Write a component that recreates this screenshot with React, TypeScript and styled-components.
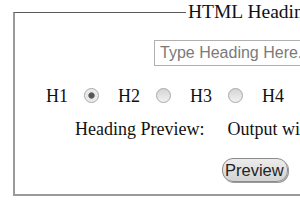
import React, { useState } from 'react';
import styled, { createGlobalStyle } from 'styled-components';

const GlobalStyle = createGlobalStyle`
  html, body {
    margin: 0;
    padding: 0;
    background: #ffffff;
    overflow: hidden;
  }
`;

const Page = styled.div`
  padding: 1px 0 0 13px;
  width: 700px;
  font-family: "Liberation Serif", "Times New Roman", serif;
  color: #111;
`;

const Frame = styled.fieldset`
  width: 560px;
  margin: 0;
  padding: 0 0 12px 0;
  border: 2px solid #9a9a9a;
  border-top: 1px solid #5a5a5a;
  display: flex;
  flex-direction: column;
  align-items: flex-start;
`;

const Title = styled.legend`
  margin-left: 171px;
  padding: 0 2px;
  font-size: 19.5px;
  line-height: 22px;
`;

const Row = styled.div<{ $top: number; $left: number }>`
  display: flex;
  align-items: center;
  margin-top: ${(p) => p.$top}px;
  padding-left: ${(p) => p.$left}px;
`;

const TextInput = styled.input`
  box-sizing: border-box;
  width: 230px;
  height: 26px;
  padding: 0 5px;
  border: 1px solid #b0b0b0;
  font-family: "Liberation Sans", Arial, sans-serif;
  font-size: 16px;
  color: #222;
  outline: none;
  &::placeholder {
    color: #7a7a7a;
  }
`;

const RadioRow = styled(Row)`
  gap: 19px;
  height: 22px;
`;

const Choice = styled.label`
  display: flex;
  align-items: center;
  gap: 16px;
  font-size: 18px;
  line-height: 22px;
`;

const Radio = styled.input`
  appearance: none;
  margin: 0 0 2px 0;
  width: 15px;
  height: 15px;
  border-radius: 50%;
  border: 1px solid #a8a8a8;
  box-sizing: border-box;
  background: linear-gradient(#d4d4d4, #f2f2f2);
  &:checked {
    background: radial-gradient(circle, #555 0 2.4px, #8a8a8a 3px, #e6e6e6 3.6px, #f4f4f4);
  }
`;

const PreviewLine = styled(Row)`
  gap: 23px;
  font-size: 18px;
  line-height: 21px;
  white-space: nowrap;
`;

const Button = styled.button`
  box-sizing: border-box;
  height: 24px;
  padding: 0 3px 0 2px;
  border: 1px solid #8c8c8c;
  border-radius: 11px;
  background: linear-gradient(#ececec, #d3d3d3);
  box-shadow: 1px 1px 0 #9a9a9a;
  font-family: "Liberation Sans", Arial, sans-serif;
  font-size: 16.5px;
  color: #222;
  line-height: 22px;
`;

const levels = ['H1', 'H2', 'H3', 'H4'];

export default function App() {
  const [level, setLevel] = useState('H1');
  const [text, setText] = useState('');

  return (
    <Page>
      <GlobalStyle />
      <Frame>
        <Title>HTML Heading Generator</Title>
        <Row $top={17} $left={139}>
          <TextInput
            placeholder="Type Heading Here..."
            value={text}
            onChange={(e) => setText(e.target.value)}
          />
        </Row>
        <RadioRow $top={19} $left={31}>
          {levels.map((l) => (
            <Choice key={l}>
              {l}
              <Radio
                type="radio"
                name="level"
                checked={level === l}
                onChange={() => setLevel(l)}
              />
            </Choice>
          ))}
        </RadioRow>
        <PreviewLine $top={12} $left={60}>
          <span>Heading Preview:</span>
          <span>Output will appear here</span>
        </PreviewLine>
        <Row $top={18} $left={207}>
          <Button type="button">Preview</Button>
        </Row>
      </Frame>
    </Page>
  );
}
